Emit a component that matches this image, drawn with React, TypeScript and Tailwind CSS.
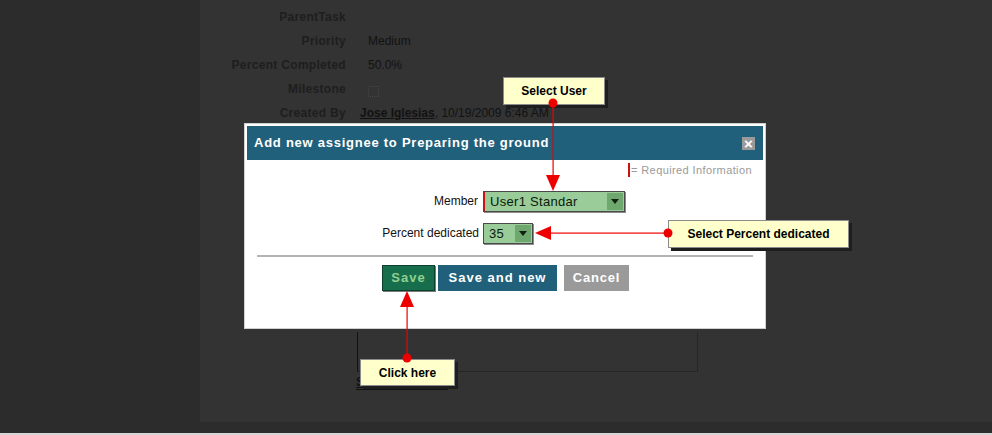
import React from 'react';

const rows = [
  { label: 'ParentTask', value: '' },
  { label: 'Priority', value: 'Medium' },
  { label: 'Percent Completed', value: '50.0%' },
  { label: 'Milestone', value: 'check' },
];

const SelectBox = ({ text, width, required }: { text: string; width: string; required?: boolean }) => (
  <div
    className={`flex h-[21px] items-center border border-[#4a4a4a] bg-[#99cc99] shadow-[1px_1px_0_#8a8a8a] ${width} ${
      required ? 'border-l-2 border-l-[#cc1111]' : ''
    }`}
  >
    <span className="flex-1 pl-[5px] text-[13px] leading-none tracking-[0.3px] text-[#0a1a0a]">{text}</span>
    <span className="mr-[1px] flex h-[17px] w-[16px] items-center justify-center bg-[#6fa86f]">
      <span className="h-0 w-0 border-x-[4px] border-t-[5px] border-x-transparent border-t-[#102010]" />
    </span>
  </div>
);

const Callout = ({ text, className }: { text: string; className: string }) => (
  <div
    className={`absolute flex items-center justify-center border border-[#8c8c8c] bg-[#ffffcc] text-[12px] font-bold text-black shadow-[3px_3px_0_#1e1e1e] ${className}`}
  >
    {text}
  </div>
);

export default function App() {
  return (
    <div
      className="relative h-[435px] w-[992px] overflow-hidden bg-[#2c2c2c]"
      style={{ fontFamily: '"Liberation Sans", Arial, sans-serif' }}
    >
      <div className="flex h-[433px] flex-col">
        <div className="flex h-[422px]">
          <div className="w-[200px]" />
          <div className="flex-1 bg-[#333333] pt-[5px]">
            <div className="flex flex-col">
              {rows.map((r) => (
                <div key={r.label} className="flex h-[24px] items-center">
                  <div className="w-[146px] text-right text-[12px] font-bold tracking-[0.3px] text-[#1e1e1e]">
                    {r.label}
                  </div>
                  <div className="pl-[22px] text-[12px] text-[#121212]">
                    {r.value === 'check' ? (
                      <span className="mt-[4px] block h-[11px] w-[11px] border border-dotted border-[#454545]" />
                    ) : (
                      r.value
                    )}
                  </div>
                </div>
              ))}
              <div className="flex h-[24px] items-center">
                <div className="w-[146px] text-right text-[12px] font-bold tracking-[0.3px] text-[#1e1e1e]">
                  Created By
                </div>
                <div className="pl-[14px] text-[12px] text-[#121212]">
                  <span className="font-bold underline">Jose Iglesias</span>, 10/19/2009 6:46 AM
                </div>
              </div>
            </div>
            <div className="ml-[157px] mt-[207px] flex">
              <div className="h-[40px] w-[341px] border border-t-0 border-[#262626] border-l-[#111]" />
            </div>
            <div className="ml-[156px] mt-[3px] w-[92px] border-b border-[#111] text-[12px] font-bold leading-[14px] text-[#111] underline">
              S
            </div>
          </div>
        </div>
        <div className="h-[11px]" />
      </div>
      <div className="h-[2px] bg-[#d6d6d6]" />

      {/* modal */}
      <div className="absolute left-[244px] top-[123px] flex h-[206px] w-[522px] flex-col border border-[#d0d0d0] bg-white p-[2px]">
        <div className="flex h-[34px] items-center justify-between bg-[#21607a] pl-[7px] pr-[8px]">
          <span className="text-[13px] font-bold tracking-[0.75px] text-white">
            Add new assignee to Preparing the ground
          </span>
          <span className="flex h-[13px] w-[13px] items-center justify-center bg-[#9a9a9a] text-[15px] font-bold leading-none text-white">
            ×
          </span>
        </div>
        <div className="mt-[2px] flex items-center justify-end pr-[11px] text-[11px] tracking-[0.4px] text-[#9a9a9a]">
          <span className="mr-[1px] h-[14px] w-[2px] bg-[#cc1111]" />= Required Information
        </div>
        <div className="mt-[12px] flex items-center">
          <div className="w-[236px] pr-[5px] text-right text-[12px] text-[#111]">Member</div>
          <SelectBox text="User1 Standar" width="w-[142px]" required />
        </div>
        <div className="mt-[11px] flex items-center">
          <div className="w-[236px] pr-[4px] text-right text-[12px] text-[#111]">Percent dedicated</div>
          <SelectBox text="35" width="w-[50px]" />
        </div>
        <div className="mx-[10px] mt-[11px] h-[2px] bg-[#b4b4b4]" />
        <div className="ml-[135px] mt-[8px] flex items-center">
          <button className="h-[26px] w-[53px] border border-[#0e3f2c] bg-[#176e4c] text-[13px] font-bold tracking-[1px] text-[#8fd08f] shadow-[1px_1px_0_#7a7a7a]">
            Save
          </button>
          <button className="ml-[3px] h-[26px] w-[119px] bg-[#21607a] text-[13px] font-bold tracking-[1px] text-white">
            Save and new
          </button>
          <button className="ml-[7px] h-[26px] w-[65px] bg-[#9a9a9a] text-[13px] font-bold tracking-[0.8px] text-white">
            Cancel
          </button>
        </div>
      </div>

      <Callout text="Select User" className="left-[503px] top-[77px] h-[28px] w-[102px]" />
      <Callout text="Select Percent dedicated" className="left-[668px] top-[220px] h-[28px] w-[181px]" />
      <Callout text="Click here" className="left-[360px] top-[359px] h-[27px] w-[95px]" />

      <svg className="pointer-events-none absolute left-0 top-0" width="992" height="435">
        <g fill="#ee0000" stroke="none">
          <rect x="552.5" y="103" width="1.2" height="74" />
          <polygon points="546,175 560,175 553,191" />
          <circle cx="553" cy="103" r="4.5" />
          <rect x="550" y="232.5" width="118" height="1.2" />
          <polygon points="551,226 551,240 535,233" />
          <circle cx="668" cy="233" r="4.5" />
          <rect x="406.5" y="306" width="1.2" height="52" />
          <polygon points="400,307 414,307 407,291" />
          <circle cx="407" cy="358" r="4.5" />
        </g>
      </svg>
    </div>
  );
}
